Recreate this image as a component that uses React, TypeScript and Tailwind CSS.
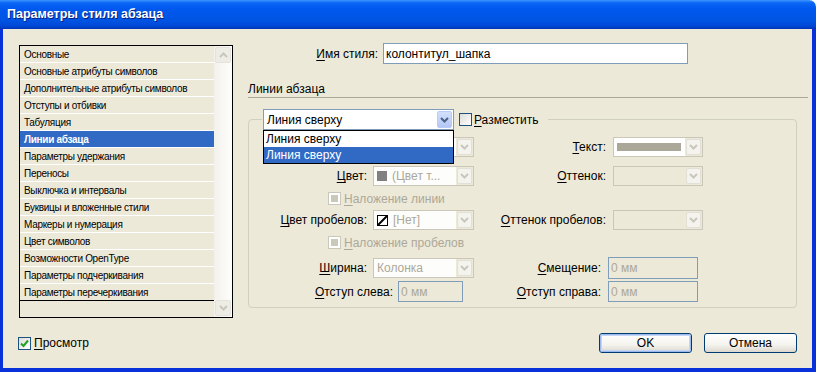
const FONT = "font-['Liberation_Sans',Arial,sans-serif]";

const items = [
  "Основные",
  "Основные атрибуты символов",
  "Дополнительные атрибуты символов",
  "Отступы и отбивки",
  "Табуляция",
  "Линии абзаца",
  "Параметры удержания",
  "Переносы",
  "Выключка и интервалы",
  "Буквицы и вложенные стили",
  "Маркеры и нумерация",
  "Цвет символов",
  "Возможности OpenType",
  "Параметры подчеркивания",
  "Параметры перечеркивания",
];

function Chevron({ color, up }: { color: string; up?: boolean }) {
  return (
    <svg width="9" height="6" viewBox="0 0 9 6">
      <polyline
        points={up ? "1,5 4.5,1.5 8,5" : "1,1 4.5,4.5 8,1"}
        fill="none"
        stroke={color}
        strokeWidth="2"
      />
    </svg>
  );
}

function Check({ checked, disabled }: { checked?: boolean; disabled?: boolean }) {
  if (disabled) {
    return (
      <span className="flex h-[13px] w-[13px] shrink-0 items-center justify-center border border-[#CAC8BB] bg-white">
        <span className="h-[7px] w-[7px] bg-[#CAC8BB]" />
      </span>
    );
  }
  return (
    <span className="flex h-[13px] w-[13px] shrink-0 items-center justify-center border border-[#1C5180] bg-[linear-gradient(135deg,#DCDCD7,#FFFFFF)]">
      {checked && (
        <svg width="9" height="9" viewBox="0 0 9 9">
          <polyline points="1,4.5 3.5,7 8,1.5" fill="none" stroke="#21A121" strokeWidth="2" />
        </svg>
      )}
    </span>
  );
}

function Acc({ text, gray }: { text: string; gray?: boolean }) {
  return (
    <span className={`whitespace-nowrap ${gray ? "text-[#ACA899]" : "text-black"}`}>
      <span className="underline underline-offset-[2px]">{text[0]}</span>
      {text.slice(1)}
    </span>
  );
}

function DisCombo({ className, field, children }: { className: string; field: string; children?: React.ReactNode }) {
  return (
    <div className={`flex h-[20px] border border-[#CBC7B8] ${className}`}>
      <div className={`flex flex-1 items-center gap-[5px] overflow-hidden pl-[3px] ${field}`}>{children}</div>
      <div className="m-[1px] flex w-[15px] items-center justify-center rounded-[2px] border border-[#E2E0D6] bg-[#F4F3EE]">
        <Chevron color="#C9C7BA" />
      </div>
    </div>
  );
}

function Field({ className, text }: { className: string; text: string }) {
  return (
    <div className={`flex items-center border border-[#7F9DB9] bg-[#ECE9D8] pl-[2px] text-[#ACA899] ${className}`}>
      {text}
    </div>
  );
}

function XPButton({ label, def }: { label: string; def?: boolean }) {
  return (
    <div className="flex h-[20px] w-[93px] items-center justify-center rounded-[3px] border border-[#003C74] bg-[linear-gradient(to_bottom,#FFFFFF,#F4F3EE_60%,#DCD8CE)]">
      <div
        className={`flex h-full w-full items-center justify-center rounded-[2px] ${
          def ? "border border-[#9DB9EB] shadow-[inset_0_0_0_1px_#C4D6F6]" : ""
        }`}
      >
        {label}
      </div>
    </div>
  );
}

export default function App() {
  return (
    <div className={`flex h-[372px] w-[816px] flex-col overflow-hidden bg-white text-[12px] text-black ${FONT}`}>
      <div className="flex h-[29px] shrink-0 items-center rounded-tr-[7px] bg-[linear-gradient(to_bottom,#3D95FF_0%,#0A66F5_10%,#0058EE_30%,#0054E3_70%,#0048D6_90%,#0033B5_100%)] pl-[7px]">
        <span className="text-[12.5px] font-bold text-white [text-shadow:1px_1px_0_#0A1E7A]">
          Параметры стиля абзаца
        </span>
      </div>
      <div className="flex flex-1 flex-col bg-[#0831D9] pb-[4px] pl-[3px] pr-[4px]">
        <div className="flex flex-1 flex-col bg-[#ECE9D8]">
          <div className="flex pl-[16px] pt-[14px]">
            {/* list */}
            <div className="mt-[2px] flex h-[273px] w-[214px] border border-black">
              <div className="flex w-[194px] flex-col text-[10px] tracking-[-0.3px]">
                {items.map((it, i) => (
                  <div
                    key={it}
                    className={`flex h-[17px] shrink-0 items-center whitespace-nowrap pl-[4px] ${
                      i === items.length - 1 ? "border-b border-black" : "border-b border-white"
                    } ${i === 5 ? "bg-[#316AC5] font-bold text-white" : ""}`}
                  >
                    {it}
                  </div>
                ))}
              </div>
              <div className="flex flex-1 flex-col justify-between bg-[linear-gradient(to_right,#F3F1EC,#FEFEFB)] p-[1px]">
                <div className="flex h-[16px] items-center justify-center rounded-[2px] border border-[#E4E2DA] bg-[#EEEDE5]">
                  <Chevron color="#C9C7BA" up />
                </div>
                <div className="flex h-[16px] items-center justify-center rounded-[2px] border border-[#E4E2DA] bg-[#EEEDE5]">
                  <Chevron color="#C9C7BA" />
                </div>
              </div>
            </div>

            {/* right column */}
            <div className="ml-[15px] flex w-[560px] flex-col">
              <div className="flex h-[21px] items-center">
                <div className="w-[130px] text-right">
                  <Acc text="Имя стиля:" />
                </div>
                <div className="ml-[5px] flex h-[21px] w-[305px] items-center border border-[#7F9DB9] bg-white pl-[2px]">
                  колонтитул_шапка
                </div>
              </div>

              <div className="mt-[18px] h-[16px] border-b border-[#ACA899] leading-[15px]">Линии абзаца</div>

              <div className="mt-[21px] flex h-[189px] w-[549px] flex-col rounded-[4px] border border-[#D0D0BF]">
                {/* legend */}
                <div className="relative -mt-[11px] ml-[13px] flex h-[21px] w-[286px] items-center bg-[#ECE9D8] pl-[1px]">
                  <div className="flex h-[21px] w-[191px] border border-[#7F9DB9] bg-white">
                    <div className="flex flex-1 items-center pl-[3px]">Линия сверху</div>
                    <div className="m-[1px] flex w-[15px] items-center justify-center rounded-[2px] border border-[#B9CCF8] bg-[linear-gradient(to_bottom,#D2E0FC,#B4C8F5)]">
                      <Chevron color="#4D6185" />
                    </div>
                  </div>
                  <div className="ml-[5px]">
                    <Check />
                  </div>
                  <span className="ml-[2px]">
                    <Acc text="Разместить" />
                  </span>
                  <div className="absolute left-[1px] top-[21px] z-10 flex w-[191px] flex-col border border-black bg-white">
                    <div className="flex h-[16px] items-center pl-[2px]">Линия сверху</div>
                    <div className="flex h-[16px] items-center bg-[#316AC5] pl-[2px] text-white">Линия сверху</div>
                  </div>
                </div>

                {/* row A (left part hidden under the open list) */}
                <div className="mt-[7px] flex h-[20px] items-center">
                  <div className="flex w-[250px] items-center">
                    <div className="w-[118px]" />
                    <DisCombo className="ml-[6px] w-[101px]" field="bg-white" />
                  </div>
                  <div className="w-[107px] text-right">
                    <Acc text="Текст:" />
                  </div>
                  <DisCombo className="ml-[7px] w-[90px]" field="bg-white">
                    <span className="h-[8px] w-[64px] bg-[#ACA899]" />
                  </DisCombo>
                </div>

                {/* row B */}
                <div className="mt-[9px] flex h-[20px] items-center">
                  <div className="flex w-[250px] items-center">
                    <div className="w-[118px] text-right">
                      <Acc text="Цвет:" />
                    </div>
                    <DisCombo className="ml-[6px] w-[101px]" field="bg-[#FDFDFB]">
                      <span className="h-[10px] w-[10px] shrink-0 bg-[#808080]" />
                      <span className="whitespace-nowrap text-[#ACA899]">(Цвет т...</span>
                    </DisCombo>
                  </div>
                  <div className="w-[107px] text-right">
                    <Acc text="Оттенок:" />
                  </div>
                  <DisCombo className="ml-[7px] w-[90px]" field="bg-[#ECE9D8]" />
                </div>

                {/* row C */}
                <div className="ml-[79px] mt-[6px] flex h-[13px] items-center">
                  <Check disabled />
                  <span className="ml-[3px]">
                    <Acc text="Наложение линии" gray />
                  </span>
                </div>

                {/* row D */}
                <div className="mt-[5px] flex h-[20px] items-center">
                  <div className="flex w-[250px] items-center">
                    <div className="w-[118px] text-right">
                      <Acc text="Цвет пробелов:" />
                    </div>
                    <DisCombo className="ml-[6px] w-[101px]" field="bg-[#FDFDFB]">
                      <svg width="11" height="11" viewBox="0 0 11 11" className="shrink-0">
                        <rect x="0.5" y="0.5" width="10" height="10" fill="white" stroke="black" />
                        <line x1="1" y1="10" x2="10" y2="1" stroke="black" strokeWidth="2" />
                      </svg>
                      <span className="text-[#ACA899]">[Нет]</span>
                    </DisCombo>
                  </div>
                  <div className="w-[107px] text-right">
                    <Acc text="Оттенок пробелов:" />
                  </div>
                  <DisCombo className="ml-[7px] w-[90px]" field="bg-[#ECE9D8]" />
                </div>

                {/* row E */}
                <div className="ml-[79px] mt-[6px] flex h-[13px] items-center">
                  <Check disabled />
                  <span className="ml-[3px]">
                    <Acc text="Наложение пробелов" gray />
                  </span>
                </div>

                {/* row F */}
                <div className="mt-[8px] flex h-[22px] items-center">
                  <div className="flex w-[250px] items-center">
                    <div className="w-[118px] text-right">
                      <Acc text="Ширина:" />
                    </div>
                    <DisCombo className="ml-[6px] w-[101px]" field="bg-[#FDFDFB]">
                      <span className="text-[#ACA899]">Колонка</span>
                    </DisCombo>
                  </div>
                  <div className="w-[102px] text-right">
                    <Acc text="Смещение:" />
                  </div>
                  <Field className="ml-[7px] h-[22px] w-[90px]" text="0 мм" />
                </div>

                {/* row G */}
                <div className="mt-[2px] flex h-[21px] items-center">
                  <div className="flex w-[250px] items-center">
                    <div className="w-[144px] text-right">
                      <Acc text="Отступ слева:" />
                    </div>
                    <Field className="ml-[5px] h-[21px] w-[65px]" text="0 мм" />
                  </div>
                  <div className="w-[102px] text-right">
                    <Acc text="Отступ справа:" />
                  </div>
                  <Field className="ml-[7px] h-[21px] w-[90px]" text="0 мм" />
                </div>
              </div>
            </div>
          </div>

          {/* bottom row */}
          <div className="mt-[15px] flex h-[20px] items-center pl-[15px] pr-[15px]">
            <Check checked />
            <span className="ml-[3px]">
              <Acc text="Просмотр" />
            </span>
            <div className="ml-auto flex gap-[12px]">
              <XPButton label="OK" def />
              <XPButton label="Отмена" />
            </div>
          </div>
        </div>
      </div>
    </div>
  );
}
